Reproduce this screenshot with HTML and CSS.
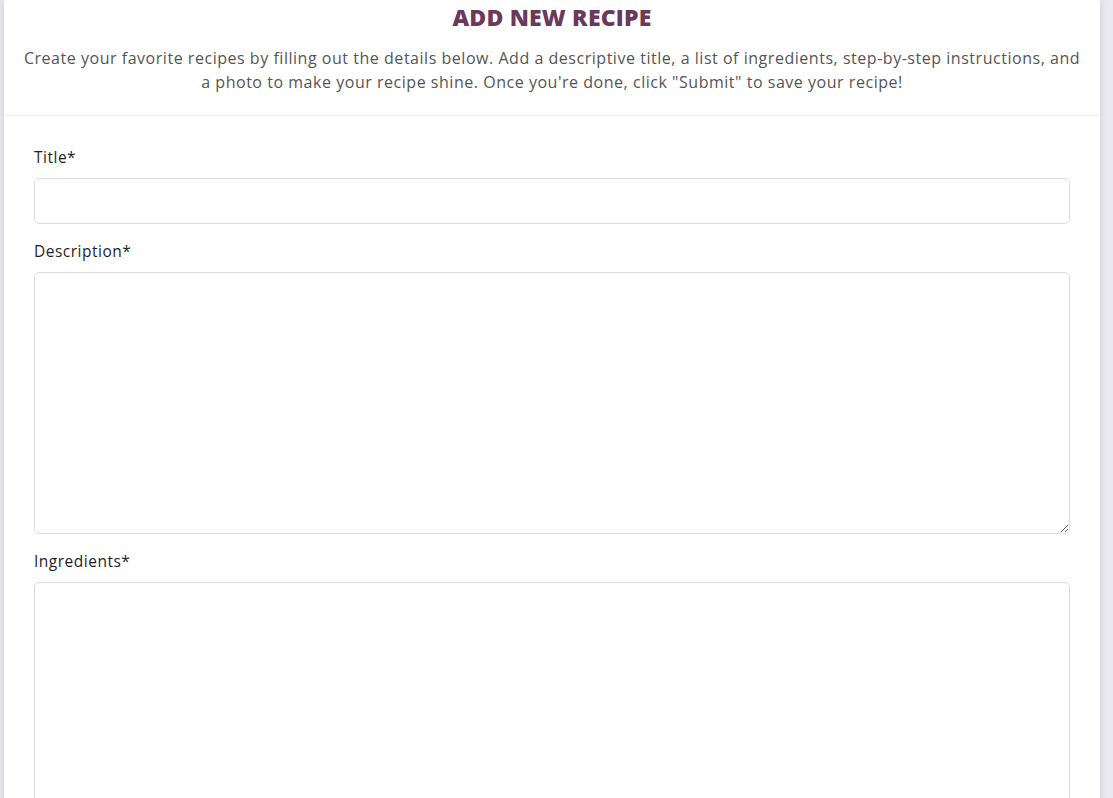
FILE: index.html
```html
<!DOCTYPE html>
<html lang="en">
<head>
<meta charset="utf-8">
<title>Add New Recipe</title>
<link rel="stylesheet" href="styles.css">
</head>
<body>
<div class="card">
  <header class="card-head">
    <h1 class="card-title">ADD NEW RECIPE</h1>
    <p class="card-intro">Create your favorite recipes by filling out the details below. Add a descriptive title, a list of ingredients, step-by-step instructions, and a photo to make your recipe shine. Once you're done, click "Submit" to save your recipe!</p>
  </header>
  <form class="card-body">
    <div class="field">
      <label class="field-label" for="title">Title*</label>
      <input class="field-input" id="title" type="text">
    </div>
    <div class="field">
      <label class="field-label" for="desc">Description*</label>
      <textarea class="field-input field-desc" id="desc"></textarea>
    </div>
    <div class="field">
      <label class="field-label" for="ingr">Ingredients*</label>
      <textarea class="field-input field-ingr" id="ingr"></textarea>
    </div>
  </form>
</div>
</body>
</html>
```

FILE: styles.css
```css
html, body {
  margin: 0;
  padding: 0;
  height: 100%;
  overflow: hidden;
}
body {
  background: #e9e8ee;
  font-family: "Open Sans", "Noto Sans", sans-serif;
}
.card {
  margin: 0 13px 0 4px;
  background: #ffffff;
  min-height: 100%;
  box-shadow: 0 2px 6px rgba(0, 0, 0, 0.12);
}
.card-head {
  padding: 2px 18px 21px;
  border-bottom: 1px solid #ececec;
  text-align: center;
}
.card-title {
  margin: 0;
  font-family: "Open Sans", sans-serif;
  font-weight: 800;
  font-size: 23px;
  line-height: 30px;
  color: #6b3a5b;
  letter-spacing: 0.2px;
}
.card-intro {
  margin: 14px 0 0;
  font-size: 16px;
  line-height: 24px;
  color: #555555;
  letter-spacing: 0.53px;
}
.card-body {
  padding: 30px 30px 0;
  display: flex;
  flex-direction: column;
  gap: 16px;
}
.field {
  display: flex;
  flex-direction: column;
  gap: 10px;
}
.field-label {
  font-size: 15.5px;
  line-height: 22px;
  color: #1f1f24;
  letter-spacing: 0.5px;
}
.field-input {
  box-sizing: border-box;
  width: 100%;
  margin: 0;
  border: 1px solid #dcdcdc;
  border-radius: 5px;
  background: #ffffff;
  font-family: inherit;
  font-size: 15px;
  padding: 8px 12px;
}
input.field-input {
  height: 46px;
}
.field-desc {
  height: 262px;
  resize: vertical;
}
.field-ingr {
  height: 262px;
  resize: vertical;
}
```
